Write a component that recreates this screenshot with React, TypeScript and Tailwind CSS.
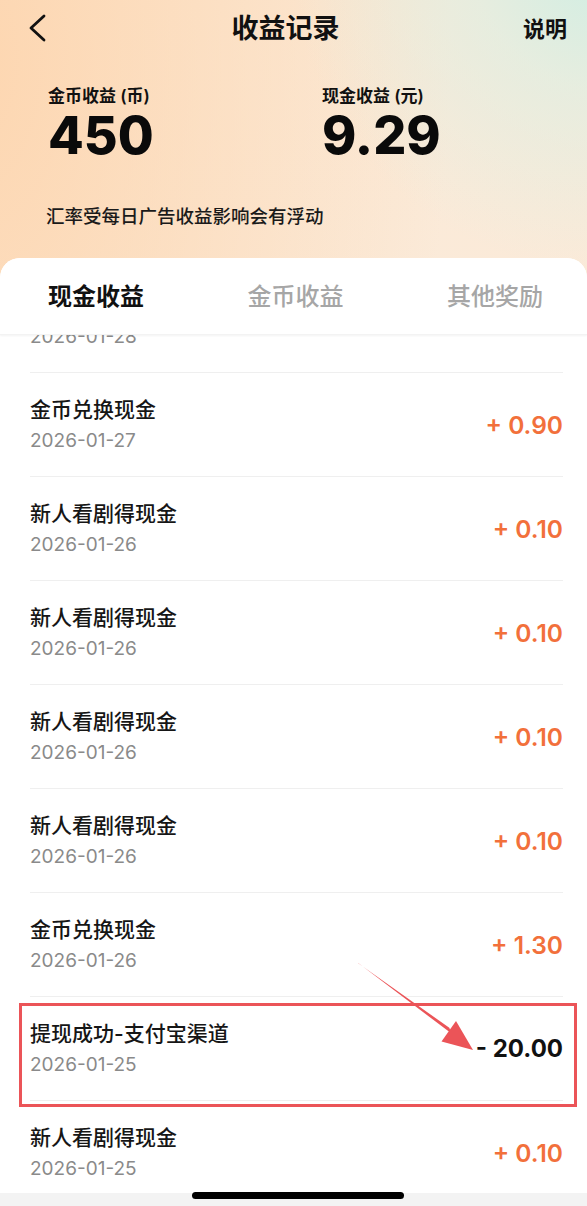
import React from "react";

type Row = { title: string; date: string; amount: string; negative?: boolean };

const rows: Row[] = [
  { title: "新人看剧得现金", date: "2026-01-28", amount: "+ 0.10" },
  { title: "金币兑换现金", date: "2026-01-27", amount: "+ 0.90" },
  { title: "新人看剧得现金", date: "2026-01-26", amount: "+ 0.10" },
  { title: "新人看剧得现金", date: "2026-01-26", amount: "+ 0.10" },
  { title: "新人看剧得现金", date: "2026-01-26", amount: "+ 0.10" },
  { title: "新人看剧得现金", date: "2026-01-26", amount: "+ 0.10" },
  { title: "金币兑换现金", date: "2026-01-26", amount: "+ 1.30" },
  { title: "提现成功-支付宝渠道", date: "2026-01-25", amount: "- 20.00", negative: true },
  { title: "新人看剧得现金", date: "2026-01-25", amount: "+ 0.10" },
];

function RecordRow({ r }: { r: Row }) {
  return (
    <div className="ml-[30px] mr-[24px] h-[104px] shrink-0 border-b border-[#efefef] flex items-center justify-between">
      <div className="flex flex-col">
        <div className="text-[21px] leading-[28px] font-medium text-[#161616]">{r.title}</div>
        <div className="mt-[5px] text-[19px] leading-[24px] text-[#8a8a8a] font-['Inter','Noto_Sans_CJK_SC',sans-serif]">
          {r.date}
        </div>
      </div>
      <div
        className={
          r.negative
            ? "text-[24px] leading-[30px] font-bold text-[#111] font-['Inter',sans-serif]"
            : "text-[24.5px] leading-[30px] font-semibold text-[#f2703b] font-['Inter',sans-serif]"
        }
      >
        {r.amount}
      </div>
    </div>
  );
}

export default function App() {
  return (
    <div className="relative w-[587px] h-[1206px] overflow-hidden flex flex-col font-['Inter','Noto_Sans_CJK_SC',sans-serif] bg-[image:radial-gradient(circle_at_104%_-4%,#cdeee4_0%,rgba(214,240,230,0.55)_10%,rgba(214,240,230,0)_23%),radial-gradient(ellipse_at_72%_90%,#fbf3ea_0%,rgba(251,243,234,0)_45%),radial-gradient(ellipse_at_-5%_5%,#fdd6b0_0%,rgba(253,214,176,0)_55%),linear-gradient(180deg,#fbe9d6_0%,#faeee2_100%)]">
      {/* Header */}
      <div className="shrink-0 h-[258px] flex flex-col">
        <div className="h-[54px] flex items-center justify-between pl-[28px] pr-[20px] relative">
          <svg width="20" height="28" viewBox="0 0 20 28" className="mt-[2px]">
            <polyline points="16,2 3,14 16,26" fill="none" stroke="#111" strokeWidth="2.8" strokeLinecap="round" strokeLinejoin="round" />
          </svg>
          <div className="text-[27px] leading-[34px] font-bold text-[#111] font-['Noto_Sans_CJK_SC',sans-serif]">收益记录</div>
          <div className="text-[22px] leading-[30px] font-bold text-[#111] font-['Noto_Sans_CJK_SC',sans-serif]">说明</div>
        </div>
        <div className="mt-[32px] flex pl-[48px]">
          <div className="w-[274px] flex flex-col">
            <div className="text-[17px] leading-[20px] font-semibold text-[#111]">金币收益 (币)</div>
            <div className="mt-[4px] text-[52px] leading-[52px] font-extrabold text-[#0a0a0a] font-['Inter',sans-serif]">450</div>
          </div>
          <div className="flex flex-col">
            <div className="text-[17px] leading-[20px] font-semibold text-[#111]">现金收益 (元)</div>
            <div className="mt-[4px] text-[52px] leading-[52px] font-extrabold text-[#0a0a0a] font-['Inter',sans-serif]">9.29</div>
          </div>
        </div>
        <div className="mt-[42px] pl-[46px] text-[18.5px] leading-[24px] font-medium text-[#1a1a1a]">汇率受每日广告收益影响会有浮动</div>
      </div>

      {/* Card */}
      <div className="flex-1 min-h-0 bg-white rounded-t-[20px] flex flex-col overflow-hidden">
        <div className="relative z-10 shrink-0 h-[77px] bg-white flex items-center justify-between pl-[48px] pr-[44px] pb-[2px] shadow-[0_1px_2px_rgba(0,0,0,0.05)] border-b border-[#f3f3f3] font-['Noto_Sans_CJK_SC',sans-serif]">
          <div className="text-[24px] leading-[36px] font-bold text-[#111]">现金收益</div>
          <div className="text-[24px] leading-[36px] font-medium text-[#a6a6a6]">金币收益</div>
          <div className="text-[24px] leading-[36px] font-medium text-[#a6a6a6]">其他奖励</div>
        </div>
        <div className="flex-1 min-h-0 overflow-hidden">
          <div className="-mt-[66px] flex flex-col">
            {rows.map((r, i) => (
              <RecordRow key={i} r={r} />
            ))}
          </div>
        </div>
        <div className="shrink-0 h-[13px] bg-[#f3f3f3] flex justify-center">
          <div className="-mt-[1px] ml-[8px] w-[212px] h-[7px] rounded-full bg-black" />
        </div>
      </div>

      {/* Annotation: red box */}
      <div className="absolute left-[19px] top-[1003px] w-[558px] h-[104px] border-[3px] border-[#eb5458]" />
      {/* Annotation: arrow */}
      <svg className="absolute left-0 top-0" width="587" height="1206" viewBox="0 0 587 1206">
        <polygon points="357.5,962.8 358.5,963.2 451.5,1033.6 449.3,1027.8" fill="#eb5458" />
        <polygon points="473,1050 441.5,1041.5 456,1021" fill="#eb5458" />
      </svg>
    </div>
  );
}
